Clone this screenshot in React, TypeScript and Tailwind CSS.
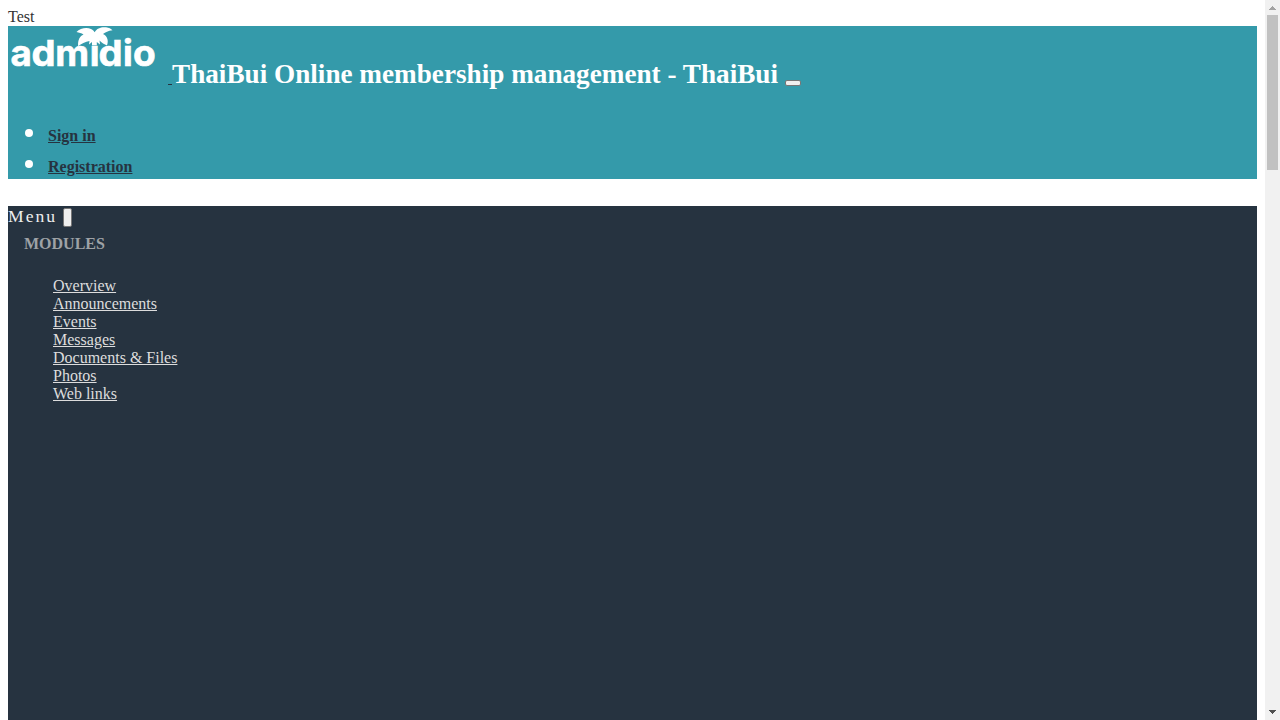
const modules = ["Overview", "Announcements", "Events", "Messages", "Documents & Files", "Photos", "Web links"];

function Logo() {
  return (
    <svg className="block h-[60px] w-[160px] shrink-0" viewBox="0 0 160 60" fill="#fff" role="img" aria-label="admidio">
      <g fontSize="36" fontWeight="700" fontFamily="Inter, sans-serif" stroke="#fff" strokeWidth=".6">
        <text transform="translate(2.400 40.400) scale(1.02 1.03)">a</text>
        <text transform="translate(23.400 40.400) scale(1.06 1)">d</text>
        <text transform="translate(47.300 40.400) scale(1.03 1.03)">m</text>
        <text x="81.800" y="40.400">{"\u0131"}</text>
        <text transform="translate(90.500 40.400) scale(1.06 1)">d</text>
        <text x="115" y="40.400">i</text>
        <text transform="translate(125.100 40.400) scale(1.03 1.03)">o</text>
      </g>
      <path d="M68.500 6C72 2 79 .8 83 3C85 4 86 5 86.700 6.300C89 2 93 .8 98 1.200C101 1.500 103 2.800 104.500 4.200C100 4.800 97.500 6.200 95 8C99 10 101 14 99 19.500C96.500 18.500 93.500 16.500 91.500 14.500L92 18.500L88.800 16V19.300H84V16L81 18.500L81.500 15C77.500 16 73 17.500 70.200 20.300C69.500 14 72 10 75.500 8.500C73.500 7 71 6.500 68.500 6Z" />
    </svg>
  );
}

export default function App() {
  return (
    <div className="flex h-[720px] w-[1280px] overflow-hidden bg-white font-['Liberation_Serif',serif] text-base leading-[18px] text-[#263340]">
      <div className="flex h-full w-[1265px] flex-col px-2 pt-2">
        <div className="h-[18px] text-[#333]">Test</div>
        <header className="h-[153px] shrink-0 bg-[#349aaa] text-white">
          <div className="flex h-[98px] items-start">
            <Logo />
            <span className="mt-[58px] h-px w-1 bg-[#263340]" />
            <h1 className="mt-8 w-[606px] text-[27.2px] leading-8 font-bold whitespace-nowrap">ThaiBui Online membership management - ThaiBui</h1>
            <button className="mt-[54px] ml-[7px] h-[6px] w-4 rounded-[2px] border border-[#767676] bg-[#efefef]" aria-label="Toggle navigation" />
          </div>
          <ul className="font-bold leading-[18px] text-[#263340]">
            {["Sign in", "Registration"].map((label) => (
              <li key={label} className="flex h-[31px] items-start pt-[3px] pl-[17px]">
                <span className="mt-[2px] mr-[15px] size-2 rounded-full bg-white" />
                <a className="underline">{label}</a>
              </li>
            ))}
          </ul>
        </header>
        <aside className="mt-[27px] grow bg-[#263340]">
          <div className="flex h-[21px] items-start text-[#eee]">
            <span className="w-[55px] text-[17.6px] leading-[21px] tracking-[2px]">Menu</span>
            <button className="mt-[2px] h-[19px] w-[9px] rounded-[2px] border border-[#767676] bg-[#efefef]" aria-label="Toggle menu" />
          </div>
          <h2 className="pt-2 pl-4 font-bold text-[#9ea2a6]">MODULES</h2>
          <ul className="pt-6 pl-[45px] text-[#ddd]">
            {modules.map((label) => (
              <li key={label}><a className="underline">{label}</a></li>
            ))}
          </ul>
        </aside>
      </div>
      <div className="flex h-full w-[15px] flex-col items-center bg-[#f1f1f1]">
        <svg className="h-[15px] w-[15px] shrink-0" viewBox="0 0 15 15" shapeRendering="crispEdges"><path d="M7 6h1v1h1v1h1v1h1v1H4V9h1V8h1V7h1z" fill="#a3a3a3" /></svg>
        <div className="h-[155px] w-[11px] bg-[#c1c1c1]" />
        <svg className="mt-auto h-[15px] w-[15px] shrink-0" viewBox="0 0 15 15" shapeRendering="crispEdges"><path d="M4 5h7v1h-1v1H9v1H8v1H7V8H6V7H5V6H4z" fill="#505050" /></svg>
      </div>
    </div>
  );
}
